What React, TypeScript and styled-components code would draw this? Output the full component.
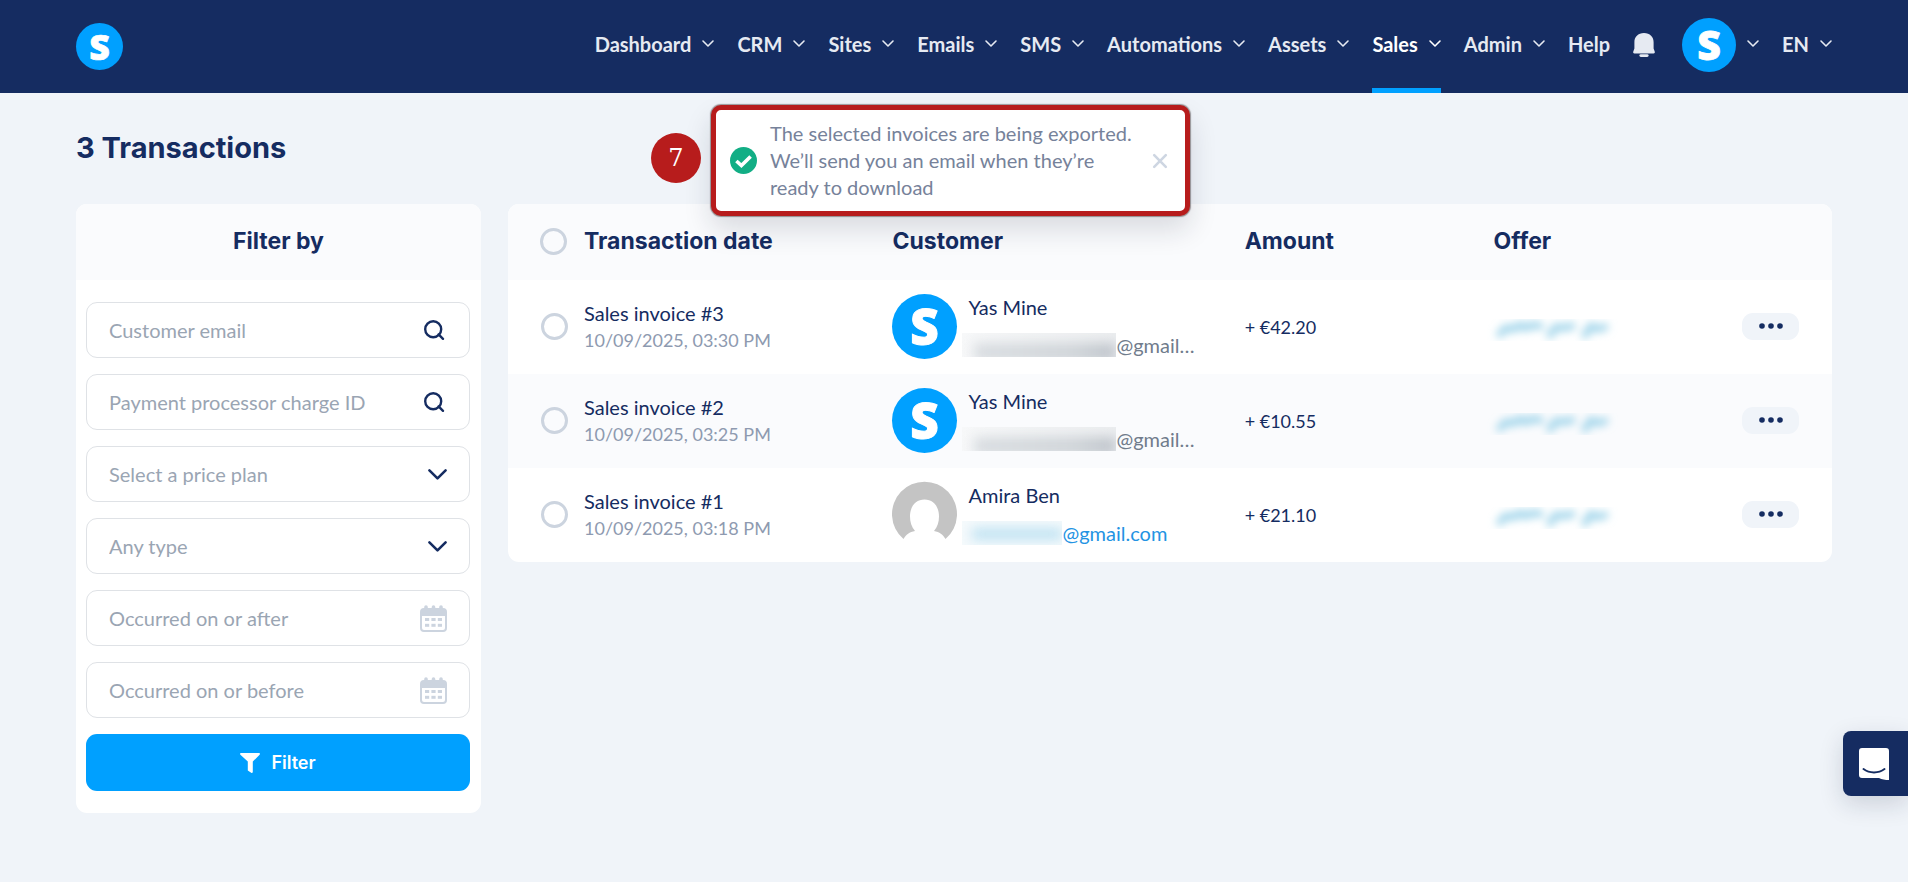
import React from "react";
import styled, { createGlobalStyle, css } from "styled-components";

const color = {
  navy: "#152c61",
  blue: "#00a0ff",
  page: "#f0f4f9",
  head: "#fafbfd",
  muted: "#8e9ab0",
  soft: "#9aa5b3",
  ring: "#ccd4df",
  red: "#b71c1c",
  green: "#12ae85",
};
const body = `Lato, "Open Sans", sans-serif`;
const heading = `Inter, "Liberation Sans", sans-serif`;

const GlobalStyle = createGlobalStyle`
  *, *::before, *::after { box-sizing: border-box; }
  body { margin: 0; background: ${color.page}; color: ${color.navy}; font: 400 20px/27px ${body}; }
  button, input, select { font: inherit; color: inherit; margin: 0; }
  button { border: 0; padding: 0; background: none; cursor: pointer; }
  a { color: inherit; text-decoration: none; }
`;

const Header = styled.header`
  display: flex;
  align-items: center;
  justify-content: space-between;
  min-height: 93px;
  padding: 0 76px;
  background: ${color.navy};
`;
const Nav = styled.nav`
  display: flex;
  align-self: stretch;
  gap: 23px;
  color: #e6eaf2;
  font-weight: 700;
`;
const NavItem = styled.button<{ $active?: boolean }>`
  display: flex;
  align-items: center;
  gap: 11px;
  padding-bottom: 4px;
  border-bottom: 5px solid transparent;
  padding-top: 5px;
  white-space: nowrap;
  ${(p) => p.$active && css`color: #fff; border-bottom-color: ${color.blue};`}
`;
const BellItem = styled(NavItem)`
  margin-right: 4px;
`;
const Main = styled.main`
  padding: 37px 76px 69px;
`;
const Title = styled.h1`
  margin: 0 0 38px;
  font: 700 29px/36px ${heading};
`;
const Columns = styled.div`
  display: grid;
  grid-template-columns: 405px minmax(0, 1fr);
  gap: 27px;
  align-items: start;
`;
const Card = styled.section`
  background: #fff;
  border-radius: 11px;
  overflow: hidden;
`;
const FilterTitle = styled.h2`
  margin: 0;
  padding: 23px 0 25px;
  background: ${color.head};
  font: 700 23px/28px ${heading};
  text-align: center;
`;
const FilterForm = styled.form`
  display: flex;
  flex-direction: column;
  gap: 16px;
  padding: 22px 11px 22px 10px;
`;
const Field = styled.div`
  display: flex;
  align-items: center;
  height: 56px;
  padding-right: 22px;
  border: 1px solid #dfe2e6;
  border-radius: 11px;
`;
const fieldText = css`
  flex: 1;
  min-width: 0;
  height: 100%;
  padding: 0 0 0 22px;
  border: 0;
  outline: 0;
  background: none;
  color: ${color.soft};
`;
const TextInput = styled.input`
  ${fieldText}
  &::placeholder { color: ${color.soft}; opacity: 1; }
`;
const Select = styled.select`
  ${fieldText}
  appearance: none;
`;
const FilterButton = styled.button`
  display: flex;
  align-items: center;
  justify-content: center;
  gap: 11px;
  height: 57px;
  border-radius: 11px;
  background: ${color.blue};
  color: #fff;
  font: 600 18px/27px ${heading};
`;

const Table = styled.table`
  width: 100%;
  table-layout: fixed;
  border-collapse: collapse;
  text-align: left;
`;
const Col = styled.col<{ $width?: string }>`
  width: ${(p) => p.$width ?? "auto"};
`;
const HeadCell = styled.th`
  height: 76px;
  padding: 0 0 2px;
  background: ${color.head};
  font: 700 23px/28px ${heading};
`;
const Row = styled.tr`
  &:nth-child(even) { background: ${color.head}; }
`;
const Cell = styled.td`
  height: 94px;
  padding: 0 0 2px;
`;
const PickHead = styled(HeadCell)`
  padding-left: 32px;
`;
const PickCell = styled(Cell)`
  padding-left: 33px;
`;
const ActionCell = styled(Cell)`
  padding-right: 33px;
  text-align: right;
`;
const Ring = styled.input`
  display: block;
  width: 27px;
  height: 27px;
  margin: 0;
  appearance: none;
  border: 3px solid ${color.ring};
  border-radius: 50%;
  &:checked { background: ${color.blue}; }
`;
const Invoice = styled.div`
  padding-top: 2px;
`;
const When = styled.div`
  color: ${color.muted};
  font-size: 18px;
`;
const Money = styled.div`
  padding-top: 2px;
  font-size: 18px;
`;
const Customer = styled.div`
  display: flex;
  gap: 11px;
`;
const CustomerText = styled.div`
  display: flex;
  flex-direction: column;
  gap: 11px;
  font-size: 20px;
  white-space: nowrap;
`;
const Email = styled.a<{ $link: boolean }>`
  display: flex;
  align-items: center;
  color: ${(p) => (p.$link ? "#2393e3" : "#707c8c")};
`;
const Hidden = styled.span<{ $width: number; $link: boolean }>`
  width: ${(p) => p.$width}px;
  height: 24px;
  margin-left: -6px;
  overflow: hidden;
  background: ${(p) => (p.$link ? "#f5fafc" : "linear-gradient(90deg, #f7f8f9, #eceef0)")};
  &::before {
    content: "";
    display: block;
    height: ${(p) => (p.$link ? "12px" : "18px")};
    margin: ${(p) => (p.$link ? "7px 0 0 10px" : "10px 0 0 12px")};
    background: ${(p) =>
      p.$link
        ? "#bfe2f2"
        : "linear-gradient(90deg, #d9dde1, #cfd4d8 70%, #bfc4cb)"};
    filter: blur(6px);
  }
`;
const MoreButton = styled.button`
  width: 57px;
  height: 27px;
  border-radius: 11px;
  background: ${color.page};
  vertical-align: top;
`;

const Toast = styled.div`
  position: absolute;
  top: 105px;
  left: 50%;
  display: flex;
  align-items: center;
  gap: 13px;
  width: 479px;
  margin-left: -243px;
  padding: 10px 18px 10px 14px;
  border: 5px solid ${color.red};
  border-radius: 10px;
  background: #fff;
  color: #76829a;
  box-shadow: 0 0 1px 1px rgba(70, 60, 60, 0.5), 0 14px 28px rgba(20, 30, 50, 0.14);
`;
const ToastText = styled.p`
  flex: 1;
  margin: 0;
`;
const Step = styled.span`
  position: absolute;
  top: 23px;
  left: -65px;
  width: 50px;
  border-radius: 50%;
  background: ${color.red};
  color: #fff;
  font: 400 24px/50px "DejaVu Serif", serif;
  text-align: center;
`;
const ChatButton = styled.button`
  position: fixed;
  right: 0;
  bottom: 86px;
  display: flex;
  align-items: center;
  width: 65px;
  height: 65px;
  padding-left: 16px;
  border-radius: 8px 0 0 8px;
  background: ${color.navy};
  box-shadow: 0 8px 24px rgba(20, 30, 60, 0.16);
`;
const Drawing = styled.svg`
  display: block;
  flex: none;
  overflow: visible;
`;
const MoreDots = styled(Drawing)`
  margin: 0 auto;
`;

const Logo = ({ size }: { size: number }) => (
  <Drawing width={size} height={size} viewBox="0 0 54 54" role="img" aria-label="Logo">
    <circle cx="27" cy="27" r="27" fill={color.blue} />
    <text x="27" y="42" textAnchor="middle" fill="#fff" stroke="#fff" strokeWidth="0.8" fontFamily="Open Sans, sans-serif" fontWeight="800" fontSize="41">S</text>
  </Drawing>
);
const Caret = () => (
  <Drawing width="12" height="7" viewBox="0 0 12 7" fill="none" stroke="currentColor" strokeWidth="1.6" strokeLinecap="round" strokeLinejoin="round">
    <path d="M1 0 6 5 11 0" />
  </Drawing>
);
const Bell = () => (
  <Drawing width="22" height="24" viewBox="0 0 22 24" fill="currentColor">
    <path d="M11 0C5 0 1.4 4 1.4 9.2V15.6L.4 18.2C-.2 19.3.2 20.4 1.500 20.4H20.500C21.800 20.4 22.2 19.3 21.600 18.2L20.600 15.6V9.2C20.600 4 17 0 11 0Z" />
    <rect x="6.4" y="21.2" width="9.2" height="2.8" rx="1.4" />
  </Drawing>
);
const SearchIcon = () => (
  <Drawing width="23" height="20" viewBox="0 0 23 20" fill="none" stroke={color.navy} strokeWidth="2.4" strokeLinecap="round">
    <circle cx="9.2" cy="9.2" r="8" />
    <path d="M14.6 14.4 19 18.8" />
  </Drawing>
);
const DownIcon = () => (
  <Drawing width="19" height="11" viewBox="0 0 19 11" fill="none" stroke={color.navy} strokeWidth="2.6" strokeLinecap="round" strokeLinejoin="round">
    <path d="M1.4 1.3 9.5 9.3 17.6 1.3" />
  </Drawing>
);
const CalendarIcon = () => (
  <Drawing width="27" height="27" viewBox="0 0 27 27" fill={color.ring}>
    <path fillRule="evenodd" d="M4 3H4.2V2A1.8 1.8 0 0 1 7.8 2V3H11.7V2A1.8 1.8 0 0 1 15.3 2V3H19.2V2A1.8 1.8 0 0 1 22.8 2V3H23A4 4 0 0 1 27 7V23A4 4 0 0 1 23 27H4A4 4 0 0 1 0 23V7A4 4 0 0 1 4 3ZM2 11V23A2 2 0 0 0 4 25H23A2 2 0 0 0 25 23V11Z" />
    {[13, 18.8].map((y) => [5, 11.4, 17.8].map((x) => <rect key={`${x}-${y}`} x={x} y={y} width="4.2" height="3" />))}
  </Drawing>
);
const Funnel = () => (
  <Drawing width="20" height="20" viewBox="0 0 20 20" fill="#fff">
    <path d="M1 0H19C20 0 20.3 1 19.6 1.7L12.8 8.6V18.8C12.8 19.8 12 20.3 11.2 19.8L7.8 17.4V8.6L.4 1.7C-.3 1 0 0 1 0Z" />
  </Drawing>
);
const CheckIcon = () => (
  <Drawing width="27" height="27" viewBox="0 0 27 27" fill="none">
    <circle cx="13.5" cy="13.5" r="13.5" fill={color.green} />
    <path d="M6.4 14 11.4 18.6 20.6 9.4" stroke="#fff" strokeWidth="3.6" />
  </Drawing>
);
const CloseIcon = () => (
  <Drawing width="14" height="14" viewBox="0 0 14 14" stroke="#ced6e2" strokeWidth="2.6" strokeLinecap="round">
    <path d="M1.2 1.2 12.8 12.8M12.8 1.2 1.2 12.8" />
  </Drawing>
);
const Person = () => (
  <Drawing width="65" height="65" viewBox="0 0 65 65">
    <path fill="#c4c4c4" d="M11.5 57A32.5 32.5 0 1 1 53.5 57C51 52.5 47.5 50 42 49C45.5 45 47 40 47 34.5C47 24 41 17.5 32.5 17.5C24 17.5 18 24 18 34.5C18 40 19.5 45 23 49C17.5 50 14 52.5 11.5 57Z" />
  </Drawing>
);
const OfferBlur = () => (
  <Drawing width="114" height="33" viewBox="0 0 114 33" role="img" aria-label="Hidden offer">
    <filter id="soften" x="-20%" y="-60%" width="140%" height="220%">
      <feGaussianBlur stdDeviation="4" />
    </filter>
    <g filter="url(#soften)" fill="none" stroke="#9fd4ea" strokeWidth="7" strokeLinecap="round">
      <path d="M6 24 12 18 20 19 26 15 32 18 38 15 46 16" />
      <path d="M56 25 62 17 70 18 78 16" />
      <path d="M91 25 97 16 104 19 111 17" />
    </g>
  </Drawing>
);
const Dots = () => (
  <MoreDots width="24" height="6" viewBox="0 0 24 6" fill={color.navy}>
    <circle cx="3" cy="3" r="2.8" />
    <circle cx="12" cy="3" r="2.8" />
    <circle cx="21" cy="3" r="2.8" />
  </MoreDots>
);
const ChatIcon = () => (
  <Drawing width="30" height="32" viewBox="0 0 30 32">
    <path fill="#fff" d="M3 0H27A3 3 0 0 1 30 3V32C26 32 23 31.5 20 30H3A3 3 0 0 1 0 27V3A3 3 0 0 1 3 0Z" />
    <path d="M4.5 21C10.5 25.5 19.5 25.5 25.5 21" fill="none" stroke={color.navy} strokeWidth="2" strokeLinecap="round" />
  </Drawing>
);

const menus = ["Dashboard", "CRM", "Sites", "Emails", "SMS", "Automations", "Assets", "Sales", "Admin"];
const invoices = [
  { no: 3, when: "10/09/2025, 03:30 PM", name: "Yas Mine", mail: "@gmail…", mask: 154, amount: "+ €42.20", member: true },
  { no: 2, when: "10/09/2025, 03:25 PM", name: "Yas Mine", mail: "@gmail…", mask: 154, amount: "+ €10.55", member: true },
  { no: 1, when: "10/09/2025, 03:18 PM", name: "Amira Ben", mail: "@gmail.com", mask: 100, amount: "+ €21.10", member: false },
];

export default function App() {
  return (
    <>
      <GlobalStyle />
      <Header>
        <a href="#home"><Logo size={47} /></a>
        <Nav aria-label="Main">
          {menus.map((m) => (
            <NavItem key={m} type="button" $active={m === "Sales"}>{m}<Caret /></NavItem>
          ))}
          <NavItem as="a" href="#help">Help</NavItem>
          <BellItem type="button" aria-label="Notifications"><Bell /></BellItem>
          <NavItem type="button" aria-label="Account"><Logo size={54} /><Caret /></NavItem>
          <NavItem type="button">EN<Caret /></NavItem>
        </Nav>
      </Header>

      <Main>
        <Title>3 Transactions</Title>
        <Columns>
          <Card>
            <FilterTitle>Filter by</FilterTitle>
            <FilterForm>
              <Field><TextInput type="email" aria-label="Customer email" placeholder="Customer email" /><SearchIcon /></Field>
              <Field><TextInput aria-label="Payment processor charge ID" placeholder="Payment processor charge ID" /><SearchIcon /></Field>
              <Field><Select aria-label="Price plan"><option>Select a price plan</option></Select><DownIcon /></Field>
              <Field><Select aria-label="Type"><option>Any type</option></Select><DownIcon /></Field>
              <Field><TextInput aria-label="Occurred on or after" placeholder="Occurred on or after" /><CalendarIcon /></Field>
              <Field><TextInput aria-label="Occurred on or before" placeholder="Occurred on or before" /><CalendarIcon /></Field>
              <FilterButton type="button"><Funnel />Filter</FilterButton>
            </FilterForm>
          </Card>

          <Card>
            <Table>
              <colgroup>
                <Col $width="76px" /><Col $width="23.3%" /><Col $width="26.6%" /><Col $width="18.8%" /><Col /><Col $width="110px" />
              </colgroup>
              <thead>
                <tr>
                  <PickHead><Ring type="checkbox" aria-label="Select all" /></PickHead>
                  <HeadCell>Transaction date</HeadCell>
                  <HeadCell>Customer</HeadCell>
                  <HeadCell>Amount</HeadCell>
                  <HeadCell>Offer</HeadCell>
                  <HeadCell aria-label="Actions" />
                </tr>
              </thead>
              <tbody>
                {invoices.map((i) => (
                  <Row key={i.no}>
                    <PickCell><Ring type="checkbox" aria-label={`Select invoice ${i.no}`} /></PickCell>
                    <Cell><Invoice>Sales invoice #{i.no}<When>{i.when}</When></Invoice></Cell>
                    <Cell>
                      <Customer>
                        {i.member ? <Logo size={65} /> : <Person />}
                        <CustomerText>
                          <span>{i.name}</span>
                          <Email href="#customer" $link={!i.member}><Hidden $width={i.mask} $link={!i.member} />{i.mail}</Email>
                        </CustomerText>
                      </Customer>
                    </Cell>
                    <Cell><Money>{i.amount}</Money></Cell>
                    <Cell><OfferBlur /></Cell>
                    <ActionCell><MoreButton type="button" aria-label="More actions"><Dots /></MoreButton></ActionCell>
                  </Row>
                ))}
              </tbody>
            </Table>
          </Card>
        </Columns>
      </Main>

      <Toast role="status">
        <Step>7</Step>
        <CheckIcon />
        <ToastText>The selected invoices are being exported. We’ll send you an email when they’re ready to download</ToastText>
        <button type="button" aria-label="Close"><CloseIcon /></button>
      </Toast>
      <ChatButton type="button" aria-label="Open chat"><ChatIcon /></ChatButton>
    </>
  );
}
